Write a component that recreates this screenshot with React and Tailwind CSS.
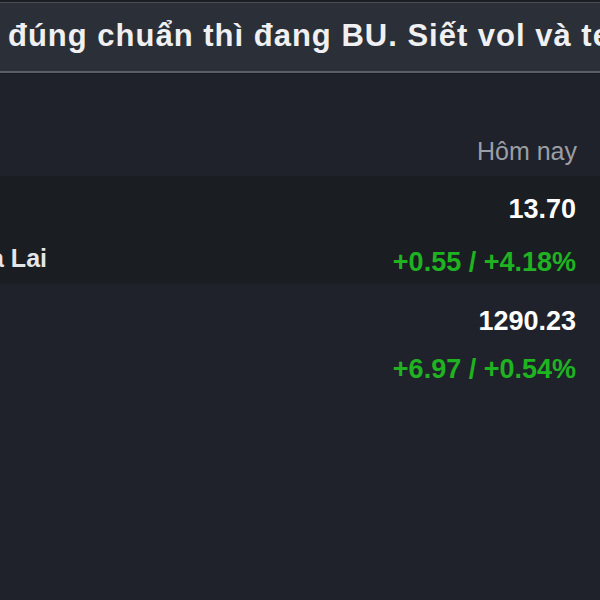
export default function App() {
  return (
    <div className="w-[600px] h-[600px] overflow-hidden bg-[#1f222a] font-['Liberation_Sans',Arial,sans-serif]">
      {/* thanh tin chạy */}
      <div className="h-[2px] bg-[#1b1e23]" />
      <div className="h-[71px] bg-[#2b2f37] border-t border-[#4a4e57] border-b-2 border-b-[#5a5e66] overflow-hidden">
        <div className="pl-[8px] pt-[16px] whitespace-nowrap text-[31px] leading-[34px] tracking-[1px] font-bold text-[#f0f0f2]">
          đúng chuẩn thì đang BU. Siết vol và tei sẽ còn chạy tiếp
        </div>
      </div>
      <div className="h-[1px] bg-[#181a1f]" />

      {/* tiêu đề cột */}
      <div className="flex justify-end pr-[23px] pt-[63px] h-[102px]">
        <span className="text-[25px] leading-[28px] text-[#9b9ea5]">Hôm nay</span>
      </div>

      {/* dòng 1 */}
      <div className="flex h-[108px] bg-[#1a1d21]">
        <div className="w-[47px] overflow-hidden flex justify-end pt-[68px]">
          <span className="whitespace-nowrap text-[25px] leading-[28px] font-bold text-[#e4e5e7]">Hoàng Anh Gia Lai</span>
        </div>
        <div className="flex-1 flex flex-col items-end pr-[24px] pt-[19px]">
          <span className="text-[27px] leading-[28px] font-bold text-white">13.70</span>
          <span className="mt-[25px] text-[27px] leading-[28px] font-bold text-[#1fb321]">+0.55 / +4.18%</span>
        </div>
      </div>

      {/* dòng 2 */}
      <div className="flex flex-col items-end pr-[24px] pt-[23px]">
        <span className="text-[27px] leading-[28px] font-bold text-white">1290.23</span>
        <span className="mt-[20px] text-[27px] leading-[28px] font-bold text-[#1fb321]">+6.97 / +0.54%</span>
      </div>
    </div>
  );
}
